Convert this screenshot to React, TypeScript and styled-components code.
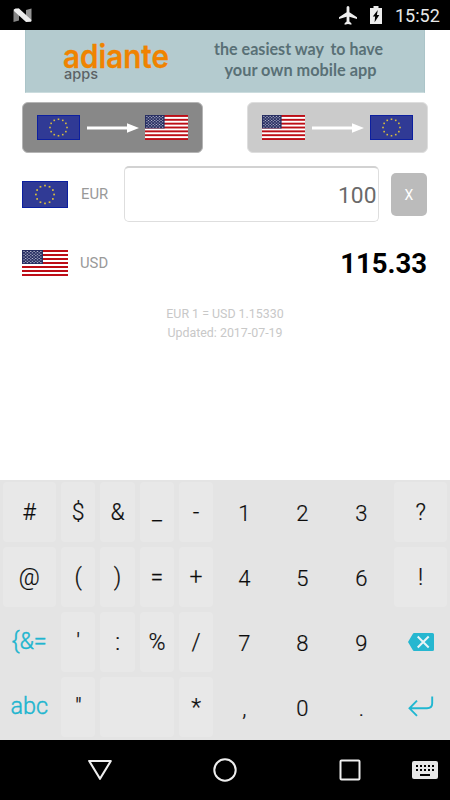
import React from "react";
import styled, { createGlobalStyle } from "styled-components";

const Global = createGlobalStyle`
  * { box-sizing: border-box; }
  body { margin: 0; background: #fff; font-family: Roboto, "Liberation Sans", sans-serif; }
  svg { display: block; flex: none; }
`;

const Screen = styled.div`
  width: 450px;
  height: 800px;
  display: flex;
  flex-direction: column;
  overflow: hidden;
  background: #fff;
`;

const StatusBar = styled.header`
  height: 30px;
  flex: none;
  display: flex;
  align-items: center;
  background: #000;
  padding: 0 10px 0 13px;
`;

const StatusIcons = styled.div`
  margin-left: auto;
  display: flex;
  align-items: center;
  gap: 13px;
`;

const Clock = styled.span`
  width: 45px;
  font-size: 18px;
  line-height: 30px;
  color: #e8e8e8;
  white-space: nowrap;
  padding-top: 1px;
`;

const Banner = styled.div`
  width: 400px;
  height: 63px;
  flex: none;
  margin: 0 auto;
  background: #b4cbcf;
  border: 1px solid #abc4c8;
  border-top: 0;
  border-bottom-color: #cbdcde;
`;

const Content = styled.main`
  flex: none;
  height: 387px;
  padding: 9px 23px 0 22px;
`;

const SwitchRow = styled.div`
  display: flex;
  justify-content: space-between;
  margin-right: -1px;
`;

const DirectionButton = styled.button<{ $active?: boolean }>`
  width: 181px;
  height: 51px;
  padding: 0 14px;
  display: flex;
  align-items: center;
  justify-content: space-between;
  border: 1px solid ${(p) => (p.$active ? "#b5b5b5" : "#dedede")};
  border-radius: 6px;
  background: ${(p) => (p.$active ? "#888" : "#cbcbcb")};
`;

const CurrencyRow = styled.div<{ $height: number; $top: number }>`
  display: flex;
  align-items: center;
  height: ${(p) => p.$height}px;
  margin-top: ${(p) => p.$top}px;
`;

const Code = styled.span<{ $gap: number }>`
  width: 30px;
  margin-left: ${(p) => p.$gap}px;
  font-size: 14.8px;
  color: #999;
  white-space: nowrap;
`;

const AmountField = styled.div`
  width: 255px;
  height: 56px;
  margin-left: auto;
  margin-right: 12px;
  padding: 2px 1.5px 0 0;
  border: 1px solid #dedede;
  border-top: 2px solid #d2d2d2;
  border-radius: 5px;
  display: flex;
  align-items: center;
  justify-content: flex-end;
  font-size: 22.8px;
  color: #6a6a6a;
`;

const ClearButton = styled.button`
  width: 36px;
  height: 43px;
  padding: 1px 0 0;
  border: 0;
  border-radius: 5px;
  background: #bbb;
  color: #fff;
  font: 14px Roboto, sans-serif;
`;

const Result = styled.strong`
  margin-left: auto;
  padding-top: 2px;
  font-size: 27.5px;
  font-weight: 700;
  color: #000;
`;

const RateInfo = styled.p`
  margin: 21px -1px 0 0;
  text-align: center;
  font-size: 12.4px;
  line-height: 19px;
  color: #c8c8c8;
`;

const Keyboard = styled.section`
  flex: none;
  height: 260px;
  display: grid;
  grid-template-columns: 58.5px 39.4px 39.4px 39.4px 38.8px 58px 58px 60px 58.5px;
  grid-template-rows: repeat(4, 65px);
  background: #e4e4e4;
`;

const Key = styled.div<{ $kind?: string; $span?: number }>`
  grid-column: span ${(p) => p.$span ?? 1};
  margin: 2px 2.6px 3px;
  border-radius: 4px;
  background: ${(p) => (p.$kind ? "transparent" : "#e8e8e8")};
  color: ${(p) => (p.$kind === "mode" ? "#20b5cf" : "#0c0c0c")};
  font-size: ${(p) => (p.$kind === "digit" ? 22 : p.$kind === "mode" ? 23.4 : 23)}px;
  font-weight: 300;
  -webkit-text-stroke: ${(p) => (p.$kind === "mode" ? 0.4 : 0.2)}px currentColor;
  padding-top: ${(p) => (p.$kind === "digit" ? 2 : 0)}px;
  padding-bottom: ${(p) => (p.$kind === "mode" ? 2 : 0)}px;
  display: flex;
  align-items: center;
  justify-content: center;
`;

const NavBar = styled.nav`
  height: 60px;
  flex: none;
  display: grid;
  grid-template-columns: 37.5px repeat(3, 125px) 37.5px;
  align-items: center;
  justify-items: center;
  background: #000;
`;

const KeyboardSwitch = styled.div`
  justify-self: end;
  margin-right: 12px;
`;

function EuFlag({ width, height }: { width: number; height: number }) {
  return (
    <svg width={width} height={height} viewBox="0 0 45 27" preserveAspectRatio="none">
      <rect width="45" height="27" fill="#0b1fa0" />
      <rect x="1" y="1" width="43" height="25" fill="#303a95" />
      {Array.from({ length: 12 }, (_, i) => {
        const a = (i * Math.PI) / 6;
        return (
          <rect
            key={i}
            x={22.5 + Math.sin(a) * 8.9 - 0.85}
            y={13.5 - Math.cos(a) * 8.9 - 0.85}
            width="1.7"
            height="1.7"
            fill="#d8bd3e"
          />
        );
      })}
    </svg>
  );
}

function UsFlag({ width, height }: { width: number; height: number }) {
  return (
    <svg width={width} height={height} viewBox="0 0 45 26" preserveAspectRatio="none">
      <rect width="45" height="26" fill="#fff" />
      {[0, 4, 8, 12, 16, 20, 24].map((y) => (
        <rect key={y} y={y} width="45" height="2" fill="#bd0d16" />
      ))}
      <rect width="20.5" height="14" fill="#272e62" />
      {Array.from({ length: 9 }, (_, r) =>
        Array.from({ length: r % 2 ? 5 : 6 }, (_, c) => (
          <rect
            key={`${r}-${c}`}
            x={1.3 + c * 3.3 + (r % 2 ? 1.65 : 0)}
            y={1 + r * 1.4}
            width="1.3"
            height="0.9"
            fill="#c4c7d8"
          />
        )),
      )}
    </svg>
  );
}

const Arrow = () => (
  <svg width="52" height="10" viewBox="0 0 52 10">
    <path d="M0 3.5H40V.3L52 5 40 9.7V6.5H0Z" fill="#fff" />
  </svg>
);

const Backspace = () => (
  <svg width="26" height="18" viewBox="0 0 26 18">
    <path d="M6 0H24.5Q26 0 26 1.5V16.5Q26 18 24.5 18H6Q5.3 18 4.9 17.3L0 9 4.9.7Q5.3 0 6 0Z" fill="#26b7d0" />
    <path d="M9.7 3.5 20.7 14.5M20.7 3.5 9.7 14.5" stroke="#e9f4f6" strokeWidth="2" />
  </svg>
);

const Enter = () => (
  <svg width="26" height="22" viewBox="0 0 26 22">
    <path d="M24.2 .5V7.3Q24.2 12.3 19 12.3H2M9 4.6 1.5 12.3 9 19.8" fill="none" stroke="#20b7d1" strokeWidth="1.9" />
  </svg>
);

type KeySpec = { label: React.ReactNode; kind?: string; span?: number };
const d = (label: string): KeySpec => ({ label, kind: "digit" });
const s = (label: string): KeySpec => ({ label });

const keys: KeySpec[] = [
  s("#"), s("$"), s("&"), s("_"), s("-"), d("1"), d("2"), d("3"), s("?"),
  s("@"), s("("), s(")"), s("="), s("+"), d("4"), d("5"), d("6"), s("!"),
  { label: "{&=", kind: "mode" }, s("'"), s(":"), s("%"), s("/"), d("7"), d("8"), d("9"),
  { label: <Backspace />, kind: "icon" },
  { label: "abc", kind: "mode" }, s('"'), { label: "", span: 2 }, s("*"), d(","), d("0"), d("."),
  { label: <Enter />, kind: "icon" },
];

export default function App() {
  return (
    <Screen>
      <Global />
      <StatusBar>
        <svg width="19" height="15" viewBox="0 0 19 15">
          <path d="M.5 1.5 6 .5V12.5L.5 14Z" fill="#858585" />
          <path d="M13 2 18.5.5V13.5L13 12Z" fill="#959595" />
          <path d="M1 1.5 2.5.5H6L18.5 12 17.8 13.8 13 14 1 3Z" fill="#eee" />
        </svg>
        <StatusIcons>
          <svg width="18" height="19" viewBox="0 0 18 19">
            <path d="M9 0Q10.4 0 10.4 1.6V6.3L18 11.2V13L10.4 10.7V15.5L12.4 17.2V18.8L9 17.9 5.6 18.8V17.2L7.6 15.5V10.7L0 13V11.2L7.6 6.3V1.6Q7.6 0 9 0Z" fill="#ededed" />
          </svg>
          <svg width="12" height="18" viewBox="0 0 12 18">
            <path d="M3.5 0H8.5V2H12V18H0V2H3.5Z" fill="#ededed" />
            <path d="M7.8 3.9 2.8 10.4H5.1L4.6 16.2 9.3 8.9H6.9Z" fill="#000" />
          </svg>
          <Clock>15:52</Clock>
        </StatusIcons>
      </StatusBar>
      <Banner>
        <svg width="398" height="62" viewBox="26 30 398 62">
          <g fontFamily="Lato" fontWeight="700">
            <text x="63" y="68" fontFamily="Inter" fontSize="32" fontWeight="600" fill="#f08300" stroke="#f08300" strokeWidth=".3" textLength="106" lengthAdjust="spacingAndGlyphs">adiante</text>
            <text x="64" y="78.5" fontFamily="Inter" fontSize="14.5" fontWeight="500" fill="#5c6265" textLength="34" lengthAdjust="spacingAndGlyphs">apps</text>
            <text x="214" y="54.5" fontSize="17.5" fill="#597076" textLength="110" lengthAdjust="spacingAndGlyphs">the easiest way</text>
            <text x="330.5" y="54.5" fontSize="17.5" fill="#597076" textLength="52.5" lengthAdjust="spacingAndGlyphs">to have</text>
            <text x="224.5" y="75.5" fontSize="17.5" fill="#597076" textLength="152" lengthAdjust="spacingAndGlyphs">your own mobile app</text>
          </g>
        </svg>
      </Banner>
      <Content>
        <SwitchRow>
          <DirectionButton $active>
            <EuFlag width={43} height={25} />
            <Arrow />
            <UsFlag width={43} height={25} />
          </DirectionButton>
          <DirectionButton>
            <UsFlag width={43} height={25} />
            <Arrow />
            <EuFlag width={43} height={25} />
          </DirectionButton>
        </SwitchRow>
        <CurrencyRow $height={56} $top={13}>
          <EuFlag width={46} height={27} />
          <Code $gap={13}>EUR</Code>
          <AmountField>100</AmountField>
          <ClearButton>X</ClearButton>
        </CurrencyRow>
        <CurrencyRow $height={40} $top={20.5}>
          <UsFlag width={46} height={26} />
          <Code $gap={12}>USD</Code>
          <Result>115.33</Result>
        </CurrencyRow>
        <RateInfo>
          EUR 1 = USD 1.15330
          <br />
          Updated: 2017-07-19
        </RateInfo>
      </Content>
      <Keyboard>
        {keys.map((k, i) => (
          <Key key={i} $kind={k.kind} $span={k.span}>{k.label}</Key>
        ))}
      </Keyboard>
      <NavBar>
        <span />
        <svg width="24" height="22" viewBox="0 0 24 22">
          <path d="M1.2 2H22.8L12 19.8Z" fill="none" stroke="#eee" strokeWidth="2.1" strokeLinejoin="round" />
        </svg>
        <svg width="24" height="24" viewBox="0 0 24 24">
          <circle cx="12" cy="12" r="10.7" fill="none" stroke="#eee" strokeWidth="2" />
        </svg>
        <svg width="22" height="22" viewBox="0 0 22 22">
          <rect x="1.5" y="1.5" width="19" height="19" rx="1" fill="none" stroke="#eee" strokeWidth="2" />
        </svg>
        <KeyboardSwitch>
          <svg width="26" height="18" viewBox="0 0 26 18">
            <rect width="26" height="18" rx="2" fill="#e6e6e6" />
            {[4, 8].map((y) =>
              [4, 8, 12, 16, 20].map((x) => <rect key={`${x}-${y}`} x={x} y={y} width="2" height="2" fill="#000" />),
            )}
            <rect x="8" y="13" width="10" height="2" fill="#000" />
          </svg>
        </KeyboardSwitch>
      </NavBar>
    </Screen>
  );
}
